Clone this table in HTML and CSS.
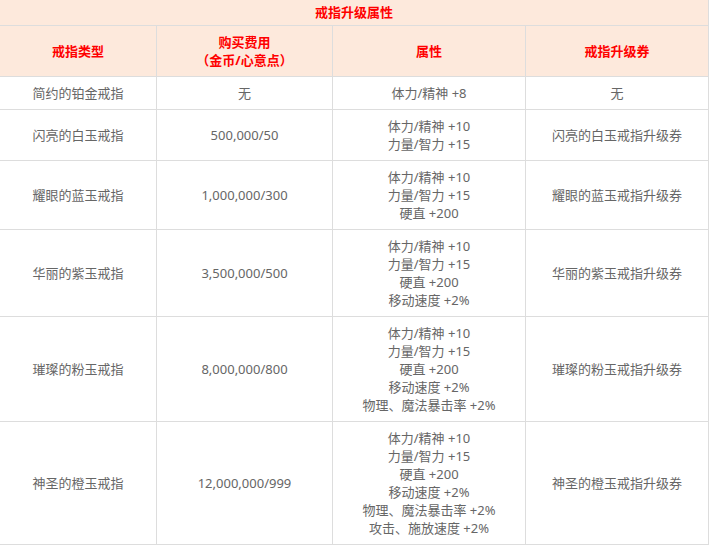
FILE: index.html
```html
<!DOCTYPE html>
<html lang="zh-CN">
<head>
<meta charset="utf-8">
<title>戒指升级属性</title>
<link rel="stylesheet" href="styles.css">
</head>
<body>
<table class="rings">
  <colgroup>
    <col class="c1"><col class="c2"><col class="c3"><col class="c4">
  </colgroup>
  <thead>
    <tr><th class="title" colspan="4">戒指升级属性</th></tr>
    <tr class="head">
      <th>戒指类型</th>
      <th>购买费用<br>（金币/心意点）</th>
      <th>属性</th>
      <th>戒指升级券</th>
    </tr>
  </thead>
  <tbody>
    <tr>
      <td>简约的铂金戒指</td>
      <td>无</td>
      <td>体力/精神 +8</td>
      <td>无</td>
    </tr>
    <tr>
      <td>闪亮的白玉戒指</td>
      <td>500,000/50</td>
      <td>体力/精神 +10<br>力量/智力 +15</td>
      <td>闪亮的白玉戒指升级券</td>
    </tr>
    <tr>
      <td>耀眼的蓝玉戒指</td>
      <td>1,000,000/300</td>
      <td>体力/精神 +10<br>力量/智力 +15<br>硬直 +200</td>
      <td>耀眼的蓝玉戒指升级券</td>
    </tr>
    <tr>
      <td>华丽的紫玉戒指</td>
      <td>3,500,000/500</td>
      <td>体力/精神 +10<br>力量/智力 +15<br>硬直 +200<br>移动速度 +2%</td>
      <td>华丽的紫玉戒指升级券</td>
    </tr>
    <tr>
      <td>璀璨的粉玉戒指</td>
      <td>8,000,000/800</td>
      <td>体力/精神 +10<br>力量/智力 +15<br>硬直 +200<br>移动速度 +2%<br>物理、魔法暴击率 +2%</td>
      <td>璀璨的粉玉戒指升级券</td>
    </tr>
    <tr>
      <td>神圣的橙玉戒指</td>
      <td>12,000,000/999</td>
      <td>体力/精神 +10<br>力量/智力 +15<br>硬直 +200<br>移动速度 +2%<br>物理、魔法暴击率 +2%<br>攻击、施放速度 +2%</td>
      <td>神圣的橙玉戒指升级券</td>
    </tr>
  </tbody>
</table>
</body>
</html>
```
FILE: styles.css
```css
html, body {
  margin: 0;
  padding: 0;
  background: #ffffff;
}

body {
  font-family: "Noto Sans", "Noto Sans CJK SC", sans-serif;
  font-size: 13px;
  color: #666666;
}

.rings {
  border-collapse: separate;
  border-spacing: 0;
  table-layout: fixed;
  width: 709px;
}

.c1 { width: 157px; }
.c2 { width: 176px; }
.c3 { width: 193px; }
.c4 { width: 183px; }

.rings th,
.rings td {
  border-right: 1px solid #dddddd;
  border-bottom: 1px solid #dddddd;
  padding: 7px 4px;
  line-height: 18px;
  text-align: center;
  vertical-align: middle;
  box-sizing: border-box;
}

.rings th {
  background: #fde9dc;
  color: #ff0000;
  font-weight: bold;
}

.rings th.title {
  padding: 3px 4px 4px;
}
```
